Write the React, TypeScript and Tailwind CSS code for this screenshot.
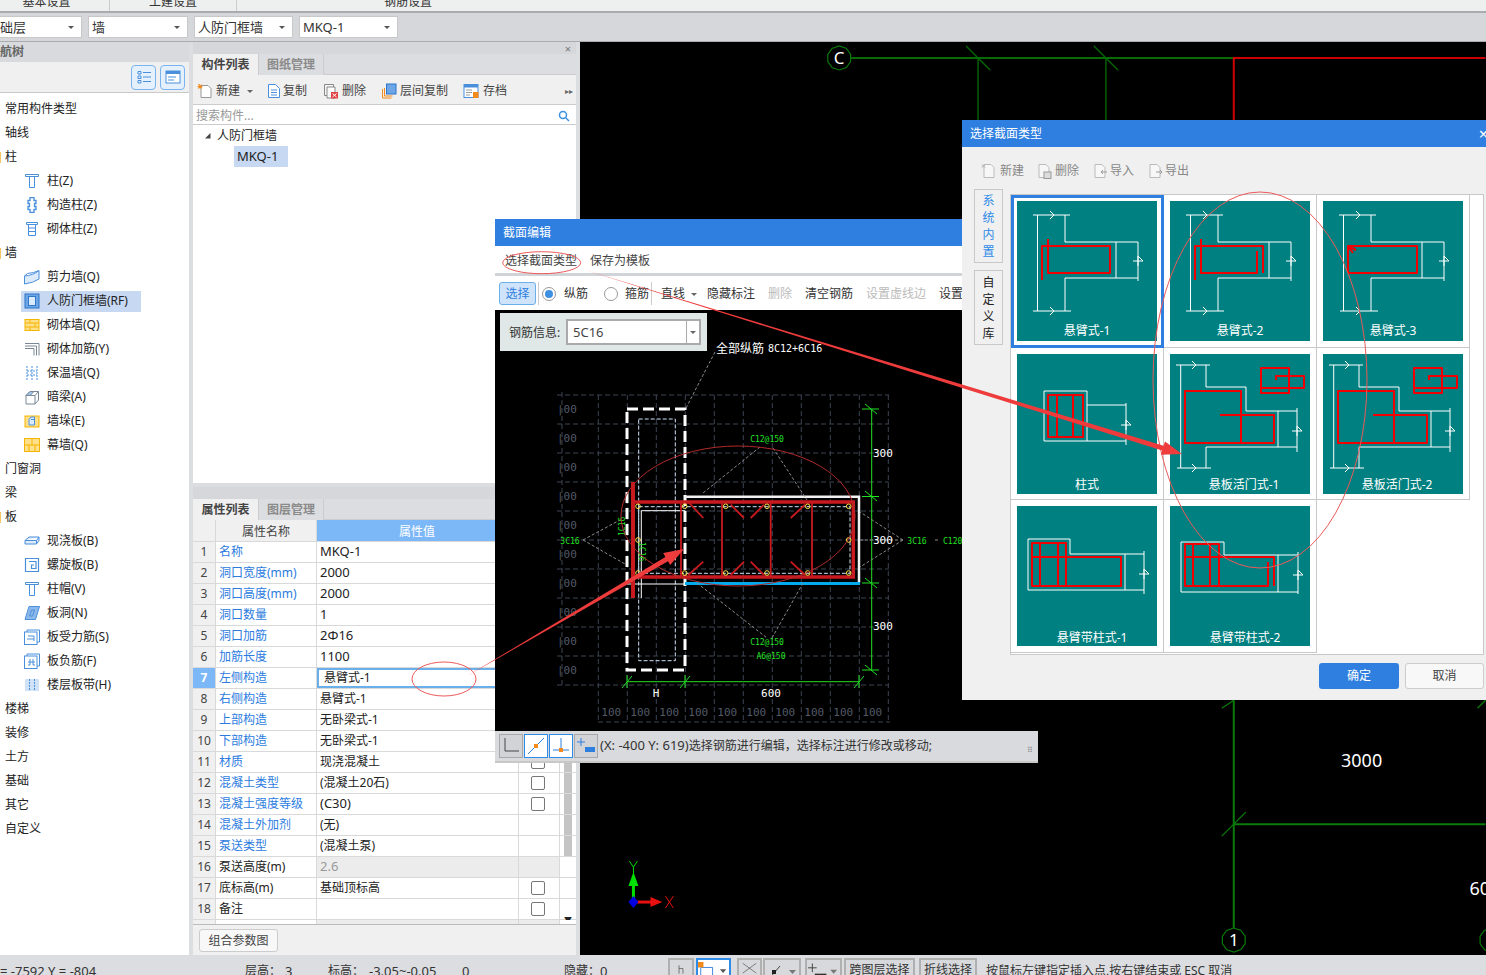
import React from "react";

const BLUE = "#4a8fdc";

type TreeRow = { label: string; icon?: string; mark?: boolean; active?: boolean };

const treeRows: TreeRow[] = [
  { label: "常用构件类型" },
  { label: "轴线" },
  { label: "柱", mark: true },
  { label: "柱(Z)", icon: "column" },
  { label: "构造柱(Z)", icon: "tie" },
  { label: "砌体柱(Z)", icon: "masonryCol" },
  { label: "墙", mark: true },
  { label: "剪力墙(Q)", icon: "shear" },
  { label: "人防门框墙(RF)", icon: "frame", active: true },
  { label: "砌体墙(Q)", icon: "brick" },
  { label: "砌体加筋(Y)", icon: "bars" },
  { label: "保温墙(Q)", icon: "insul" },
  { label: "暗梁(A)", icon: "beam" },
  { label: "墙垛(E)", icon: "pier" },
  { label: "幕墙(Q)", icon: "curtain" },
  { label: "门窗洞" },
  { label: "梁" },
  { label: "板", mark: true },
  { label: "现浇板(B)", icon: "slab" },
  { label: "螺旋板(B)", icon: "spiral" },
  { label: "柱帽(V)", icon: "column" },
  { label: "板洞(N)", icon: "hole" },
  { label: "板受力筋(S)", icon: "rebarS" },
  { label: "板负筋(F)", icon: "rebarF" },
  { label: "楼层板带(H)", icon: "strip" },
  { label: "楼梯" },
  { label: "装修" },
  { label: "土方" },
  { label: "基础" },
  { label: "其它" },
  { label: "自定义" },
];

type PropRow = { name: string; value: string; plain?: boolean; check?: boolean; off?: boolean; latin?: boolean };

const propRows: PropRow[] = [
  { name: "名称", value: "MKQ-1", latin: true },
  { name: "洞口宽度(mm)", value: "2000", latin: true },
  { name: "洞口高度(mm)", value: "2000", latin: true },
  { name: "洞口数量", value: "1", latin: true },
  { name: "洞口加筋", value: "2Φ16", latin: true },
  { name: "加筋长度", value: "1100", latin: true },
  { name: "左侧构造", value: "悬臂式-1" },
  { name: "右侧构造", value: "悬臂式-1" },
  { name: "上部构造", value: "无卧梁式-1" },
  { name: "下部构造", value: "无卧梁式-1" },
  { name: "材质", value: "现浇混凝土", check: true },
  { name: "混凝土类型", value: "(混凝土20石)", check: true },
  { name: "混凝土强度等级", value: "(C30)", check: true, latin: true },
  { name: "混凝土外加剂", value: "(无)" },
  { name: "泵送类型", value: "(混凝土泵)" },
  { name: "泵送高度(m)", value: "2.6", plain: true, off: true, latin: true },
  { name: "底标高(m)", value: "基础顶标高", plain: true, check: true },
  { name: "备注", value: "", plain: true, check: true },
  { name: "", value: "", off: true, plain: true },
];

function TreeIcon({ name }: { name: string }) {
  const s = { fill: "none", stroke: BLUE, strokeWidth: 1 };
  const o = { fill: "#ffe08a", stroke: "#f5b400", strokeWidth: 1 };
  const icons: Record<string, React.ReactNode> = {
    column: <path {...s} d="M1.500 1.500h13v2h-13zM5.500 3.500v11h5v-11" />,
    tie: <path {...s} strokeWidth="1.300" d="M6 .5h4v3h2v3h-1.500v3H12v3h-2v3H6v-3H4v-3h1.500v-3H4v-3h2z" />,
    masonryCol: <path {...s} d="M2.500 1.500h11v2h-11zM4.500 3.500h7v11h-7zM4.500 7h7M4.500 10.500h7" />,
    shear: (
      <g {...s}>
        <path fill="#dcebfb" d="M.5 7Q9 6.500 15 1.500V10Q9 14 .5 15z" />
        <path d="M.5 7l3-2.500Q10 4 15 1.500" />
      </g>
    ),
    frame: (
      <g>
        <rect x="1" y="1" width="14" height="14" fill="#6ca6e6" stroke="#2f75c8" />
        <rect x="4.500" y="3.500" width="7" height="9" fill="#dcebfb" stroke="#2f75c8" />
      </g>
    ),
    brick: (
      <g {...o}>
        <rect x="1" y="2.500" width="14" height="11" />
        <path d="M1 6h14M1 10h14M6 2.500V6M11 6v4M6 10v3.500" />
      </g>
    ),
    bars: <path fill="none" stroke="#7a8794" d="M1 2.500h14v12M1 5h11.500v9.500M1 7.500h9v7" />,
    insul: <path {...s} strokeDasharray="2 1" d="M3 1v14M8 1v14M13 1v14M3 6h10M3 10h10" />,
    beam: (
      <g fill="none" stroke="#7a8794">
        <path d="M2 6.500V15h9V6.500zM2 6.500 6 2.500h8.500L11 6.500M14.500 2.500V11L11 15" />
        <path fill="#9fc4ee" d="M2 6.500 6 2.500h4L6 6.500z" />
      </g>
    ),
    pier: (
      <g>
        <rect x="1" y="3" width="14" height="11" fill="#ffe08a" stroke="#f5b400" />
        <path fill="#dcebfb" stroke={BLUE} d="M5 6.500 7 4h3.500v8H5zM7 6.500h3.500" />
      </g>
    ),
    curtain: (
      <g {...o}>
        <rect x=".5" y="1.500" width="15" height="13" />
        <path d="M.5 8h15M8 1.500V8M5 8v6.500M11 8v6.500" />
      </g>
    ),
    slab: <path {...s} fill="#dcebfb" d="M1 7.500 5 4h10l-2.500 3.500zM1 7.500v3.500h11.500l2.500-3.500V4M12.500 7.500V11" />,
    spiral: <path {...s} strokeWidth="1.200" d="M1.500 1.500h13v13h-13zM5 4.500h7v7H7.500V8H10" />,
    hole: <path stroke={BLUE} fill="#8db8ea" d="M1 14.500 5 1.500h10.500l-4 13zM5.500 11l2-6h3l-2 6z" />,
    rebarS: (
      <g {...s}>
        <rect x=".5" y="3" width="12.500" height="12.500" />
        <path d="M3 3V1h12.500v12H13M4 7h6v5M3 10h7" />
      </g>
    ),
    rebarF: (
      <g {...s}>
        <rect x=".5" y="3" width="12.500" height="12.500" />
        <path d="M3 3V1h12.500v12H13M6 6v6h-2M9 6v6h2M4 9h7" />
      </g>
    ),
    strip: (
      <g>
        <rect x="1" y="2" width="14" height="12" fill="#cfe2f8" />
        <path stroke={BLUE} strokeDasharray="2 1" d="M5.500 2v12M10.500 2v12" />
      </g>
    ),
  };
  return (
    <svg viewBox="0 0 16 16" className="h-4 w-4 shrink-0">
      {icons[name]}
    </svg>
  );
}

function NavTree() {
  return (
    <div className="flex w-[189px] shrink-0 flex-col bg-white">
      <div className="h-[20px] overflow-hidden bg-[#d8dadd] text-[12px] leading-[20px] font-semibold text-[#666]">
        <span className="-ml-[12px] inline-block">导航树</span>
      </div>
      <div className="flex h-[31px] items-center justify-end gap-[4px] border-b border-[#c9c9c9] bg-[#f0f0f0] pr-[4px]">
        <div className="flex h-[25px] w-[25px] items-center justify-center rounded-[4px] border border-[#79b4f0] bg-[#e4f0fc]">
          <svg viewBox="0 0 16 16" className="h-4 w-4">
            <path fill="none" stroke={BLUE} d="M2 2.500h3v2.500H2zM2 7h3v2.500H2zM2 11.500h3V14H2zM7 3.500h8M7 8h8M7 12.500h8" />
          </svg>
        </div>
        <div className="flex h-[25px] w-[25px] items-center justify-center rounded-[4px] border border-[#79b4f0] bg-[#e4f0fc]">
          <svg viewBox="0 0 16 16" className="h-4 w-4">
            <rect x="1" y="2" width="14" height="12" fill="#fff" stroke={BLUE} />
            <path fill={BLUE} d="M1 2h14v3H1z" />
            <path stroke={BLUE} d="M3 8h8M3 11h6" />
          </svg>
        </div>
      </div>
      <div className="pt-[4px] text-[12px] text-[#222]">
        {treeRows.map((r) =>
          r.icon ? (
            <div key={r.label} className="flex h-6 items-center">
              <div className={`ml-[21px] flex h-[21px] w-[120px] items-center gap-[7px] pl-[3px] ${r.active ? "bg-[#c7d9f2]" : ""}`}>
                <TreeIcon name={r.icon} />
                <span className="whitespace-nowrap">{r.label}</span>
              </div>
            </div>
          ) : (
            <div key={r.label} className="flex h-6 items-center">
              <div className={`mr-[4px] h-[11px] w-px ${r.mark ? "bg-[#f5c563]" : ""}`} />
              <span>{r.label}</span>
            </div>
          )
        )}
      </div>
    </div>
  );
}

function ToolDoc({ kind }: { kind: string }) {
  const icons: Record<string, React.ReactNode> = {
    add: (
      <g>
        <path fill="#fff" stroke="#999" d="M4 2.500h7l3 3v9H4z" />
        <path fill="#f28a1e" d="M1 1h1.500l.5 1.500L4.500 1v2L6 3.500 4.500 4.500 5 6 3 5 1 6l.500-1.500L0 3.500l2-.5z" />
      </g>
    ),
    copy: (
      <g fill="#fff" stroke={BLUE}>
        <path d="M2.500 1.500h7l4 4v9h-11z" />
        <path d="M5 7h6M5 9.500h6M5 12h6" />
      </g>
    ),
    del: (
      <g>
        <path fill="#f6f6f6" stroke="#888" d="M1.500 1.500h9v11h-9z" />
        <path fill="#fff" stroke="#888" d="M4 4h8v11H4z" />
        <rect x="8" y="9" width="7" height="6.500" fill="#e04040" />
        <path stroke="#fff" d="M9.500 10.500l4 3.500M13.500 10.500l-4 3.500" />
      </g>
    ),
    floors: (
      <g>
        <path fill="none" stroke="#f28a1e" d="M1.500 6v9h9M3.500 5v8h8" />
        <rect x="5.500" y="1" width="9.500" height="10" fill="#6ca6e6" stroke="#2f75c8" />
      </g>
    ),
    save: (
      <g>
        <rect x="1" y="1.500" width="14" height="13" fill="#fff" stroke={BLUE} />
        <path fill={BLUE} d="M1 1.500h14v3H1z" />
        <path stroke="#999" d="M3 7h6M3 9.500h6M3 12h4" />
        <rect x="10" y="9" width="5.500" height="6" fill="#f28a1e" />
      </g>
    ),
  };
  return (
    <svg viewBox="0 0 16 16" className="h-4 w-4 shrink-0">
      {icons[kind]}
    </svg>
  );
}

function TabPair({ a, b }: { a: string; b: string }) {
  return (
    <div className="flex h-[21px] bg-[#f0f0f0] text-[12px] leading-[21px]">
      <div className="w-[66px] border-r border-[#ccc] text-center font-semibold text-[#444]">{a}</div>
      <div className="w-[65px] border-r border-[#ccc] bg-[#dcdde0] text-center font-semibold text-[#8a8a8a]">{b}</div>
      <div className="flex-1 border-b border-[#ccc] bg-[#dcdde0]" />
    </div>
  );
}

function ComponentPanel() {
  return (
    <div className="flex h-[441px] flex-col bg-white">
      <div className="flex h-[12px] items-center justify-end bg-[#d5d7da] pr-[5px] text-[11px] leading-none text-[#777]">×</div>
      <TabPair a="构件列表" b="图纸管理" />
      <div className="flex h-[30px] items-center border-b border-[#ccc] bg-[#f0f0f0] pt-[2px] pl-[4px] text-[12px] text-[#444]">
        <ToolDoc kind="add" />
        <span className="ml-[3px]">新建</span>
        <svg viewBox="0 0 8 8" className="ml-[6px] h-2 w-2">
          <path fill="#666" d="M1 3h6L4 6z" />
        </svg>
        <span className="ml-[12px]" />
        <ToolDoc kind="copy" />
        <span className="ml-[1px]">复制</span>
        <span className="ml-[16px]" />
        <ToolDoc kind="del" />
        <span className="ml-[3px]">删除</span>
        <span className="ml-[15px]" />
        <ToolDoc kind="floors" />
        <span className="ml-[3px]">层间复制</span>
        <span className="ml-[15px]" />
        <ToolDoc kind="save" />
        <span className="ml-[4px]">存档</span>
        <span className="ml-auto pr-[3px] text-[8px] text-[#666]">▸▸</span>
      </div>
      <div className="flex h-[20px] items-center justify-between border-b border-[#ccc] pt-[2px] pr-[6px] pl-[3px] text-[12px] text-[#999]">
        <span>搜索构件...</span>
        <svg viewBox="0 0 12 12" className="h-3 w-3">
          <circle cx="5" cy="5" r="3.500" fill="none" stroke="#3d8fe0" strokeWidth="1.500" />
          <path stroke="#3d8fe0" strokeWidth="1.500" d="M8 8l3 3" />
        </svg>
      </div>
      <div className="flex h-[21px] items-center pl-[11px] text-[12px] text-[#222]">
        <svg viewBox="0 0 8 8" className="h-2 w-2">
          <path fill="#444" d="M1 6.500 6.500 1v5.500z" />
        </svg>
        <span className="ml-[5px]">人防门框墙</span>
      </div>
      <div className="ml-[41px] h-[21px] w-[54px] bg-[#c7d9f2] pl-[3px] text-[13px] leading-[21px] text-[#222]">MKQ-1</div>
    </div>
  );
}

function PropertyPanel() {
  return (
    <div className="flex flex-1 flex-col bg-[#f0f0f0]">
      <div className="h-[12px] bg-[#d5d7da]" />
      <TabPair a="属性列表" b="图层管理" />
      <div className="h-[405px] overflow-hidden border-b border-[#bbb] bg-white text-[12px]">
        <div className="flex h-[22px] border-b border-[#d9d9d9] leading-[23px]">
          <div className="w-[23px] border-r border-[#d9d9d9] bg-[#f0f0f0]" />
          <div className="w-[101px] border-r border-[#d9d9d9] bg-[#f0f0f0] text-center text-[#444]">属性名称</div>
          <div className="flex-1 bg-[#7cb8f8] pr-[59px] text-center text-white">属性值</div>
        </div>
        {propRows.map((r, i) => {
          const selected = i === 6;
          return (
            <div key={i} className="flex h-[21px] border-b border-[#d9d9d9] leading-[20px]">
              <div className={`w-[23px] border-r border-[#d9d9d9] text-center ${selected ? "bg-[#7cb8f8] font-bold text-white" : "bg-[#f0f0f0] text-[#444]"}`}>
                {i < 18 ? i + 1 : ""}
              </div>
              <div className={`w-[101px] border-r border-[#d9d9d9] pl-[3px] whitespace-nowrap ${r.plain ? "text-[#222]" : "text-[#2c7ce0]"}`}>
                {r.name}
              </div>
              <div
                className={`w-[202px] ${r.latin ? "text-[13px] leading-[19px]" : "text-[12px]"} ${r.off ? "bg-[#ececec] text-[#999]" : "text-[#222]"} ${selected ? "border-2 border-[#6aaeea] pl-[5px] leading-[16px]" : "border-r border-[#d9d9d9] pl-[3px]"}`}
              >
                {r.value}
              </div>
              <div className={`flex w-[41px] items-center justify-center border-r border-[#d9d9d9] pr-[2px] ${r.off ? "bg-[#ececec]" : ""}`}>
                {r.check && <div className="h-[14px] w-[14px] rounded-[2px] border border-[#777] bg-white" />}
              </div>
              <div className="flex w-[16px] justify-center bg-white">
                {i < 15 && <div className="w-[8px] bg-[#c4c4c4]" />}
                {i === 17 && <span className="text-[8px] leading-[42px] text-[#222]">▼</span>}
              </div>
            </div>
          );
        })}
      </div>
      <div className="pt-[4px] pl-[6px]">
        <div className="h-[23px] w-[79px] rounded-[3px] border border-[#ccc] bg-[#f8f8f8] text-center text-[12px] leading-[21px] text-[#444]">组合参数图</div>
      </div>
    </div>
  );
}

function MainCanvas() {
  const circle = (cx: number, cy: number) => (
    <polygon
      fill="none"
      stroke="#0a7a0a"
      strokeWidth="1.200"
      points={Array.from({ length: 10 }, (_, i) => {
        const a = (i / 10) * Math.PI * 2 + 0.3;
        return `${cx + 12 * Math.cos(a)},${cy + 12 * Math.sin(a)}`;
      }).join(" ")}
    />
  );
  return (
    <div className="min-w-0 flex-1 bg-black">
      <svg viewBox="580 41 906 914" className="block h-full w-full">
        <g stroke="#056b05" fill="none">
          <path strokeWidth="2" d="M851 57H1234" />
          <path strokeWidth="1.300" d="M978 57V120M1106 57V120M966 45l24 24M1094 45l24 24" />
          <path strokeWidth="2" stroke="#0a7a0a" d="M1234 700V928M1234 824H1486" />
          <path strokeWidth="1.300" stroke="#0a7a0a" d="M1222 836l24-24M1222 708l12-8M1478 708l8-8" />
        </g>
        <path stroke="#cc0000" strokeWidth="2" fill="none" d="M1486 57H1234V120" />
        {circle(839, 57)}
        {circle(1234, 940)}
        {circle(1492, 940)}
        <g fill="#fff">
          <text x="839" y="63" textAnchor="middle" className="text-[17px]">C</text>
          <text x="1234" y="946" textAnchor="middle" className="text-[17px]">1</text>
          <text x="1362" y="767" textAnchor="middle" className="text-[18px]">3000</text>
          <text x="1470" y="895" className="text-[18px]">60</text>
        </g>
        <path stroke="#00e000" strokeWidth="3" d="M633 902V884" />
        <path fill="#00e000" d="M628 886l5-14 5 14z" />
        <path stroke="#e81010" strokeWidth="3" d="M633 902H652" />
        <path fill="#e81010" d="M650 897l12 5-12 5z" />
        <path fill="#0000e0" d="M633 896l5 6-5 6-5-6z" />
        <path stroke="#00e000" fill="none" d="M629 861l4 6 4-6M633 867v6" />
        <path stroke="#e81010" fill="none" d="M665 896l8 12M673 896l-8 12" />
      </svg>
    </div>
  );
}

function SectionDrawing() {
  const xs = [598.3, 627.3, 656.3, 685.3, 714.3, 743.3, 772.3, 801.3, 830.3, 859.3, 888.3];
  const ys = [395, 424, 453, 482, 511, 540, 569, 598, 627, 656, 685];
  const rebarX = [638, 684.7, 725.7, 767, 807.7, 848.7];
  const font = "font-['DejaVu_Sans_Mono','Liberation_Mono',monospace]";
  return (
    <svg viewBox="495 310 543 421" className="block h-[421px] w-[543px]">
      <g stroke="#3d4452" strokeDasharray="5 3" fill="none">
        {xs.map((x) => (
          <path key={x} d={`M${x} 395V723`} />
        ))}
        {ys.map((y) => (
          <path key={y} d={`M557 ${y}H889`} />
        ))}
        <path d="M562 392V686M598 722H890" />
      </g>
      <g fill="#525a68" className={`${font} text-[11px]`}>
        {ys.slice(0, 10).map((y) => (
          <text key={y} x="557" y={y + 18}>|00</text>
        ))}
        {xs.slice(0, 10).map((x) => (
          <text key={x} x={x + 3} y="716">100</text>
        ))}
      </g>

      <rect x="627" y="409" width="58" height="261" fill="none" stroke="#fff" strokeWidth="3" strokeDasharray="11 5" />
      <rect x="638.700" y="419" width="36.600" height="241.700" fill="none" stroke="#cfe2f8" strokeDasharray="4 2" />
      <path d="M685 496.700H859V583" fill="none" stroke="#f2f2f2" strokeWidth="2.500" />
      <path d="M685 583.500H860" stroke="#00aaee" strokeWidth="3" />
      <path d="M685 510.700H641.300V598M627 584H685" fill="none" stroke="#fff" />
      <rect x="638.700" y="506.700" width="211.300" height="66.600" fill="none" stroke="#cfe2f8" strokeDasharray="4 2" />

      <g stroke="#c8191e" fill="none">
        <path strokeWidth="3.500" d="M632 502H853.300V577H632" />
        <path strokeWidth="4" d="M633 482V598" />
        <path strokeWidth="1.800" d="M681 502V577M722 502V577M770.700 502V577M812 502V577" />
        <path strokeWidth="1.800" d="M688.300 502l15 16M730.700 504.700 744 518M764 504.700 750.700 518M805 504.700 790.700 518M688.300 575l15-13.300M730.700 575 744 561.700M764 575l-13.300-13.300M805 575l-14.300-13.300" />
      </g>
      <g fill="none" stroke="#ffe14a">
        {rebarX.map((x) => (
          <React.Fragment key={x}>
            <circle cx={x} cy="506.300" r="2.300" />
            <circle cx={x} cy="573" r="2.300" />
          </React.Fragment>
        ))}
        <circle cx="638" cy="540" r="2.300" />
        <circle cx="848.700" cy="540" r="2.300" />
      </g>

      <g stroke="#22e022" fill="none">
        <path d="M871.700 409V670M862 409h17M862 496.500h17M862 583h17M862 670h17M627 681.700H859M627 675v13M685 675v13M859 675v13" />
        <path d="M865 404l12 10M865 491l12 10M865 578l12 10M865 665l12 10M622 688l10-12M680 688l10-12M854 688l10-12" />
      </g>
      <g stroke="#8a8a8a" strokeDasharray="3 2" fill="none">
        <path d="M715 352 686 408M760 447 703 493M773 448l34 52M697 583l70 55M803 583l-31 55M583 540l37-20M583 540l42 24M903 540l-43-28M903 540l-43 27M860 540h43M935 540h5" />
      </g>
      <g fill="#22e022" className={`${font} text-[8px]`}>
        <text x="767" y="442" textAnchor="middle">C12@150</text>
        <text x="570" y="544" textAnchor="middle">3C16</text>
        <text x="917" y="544" textAnchor="middle">3C16</text>
        <text x="943" y="544">C120</text>
        <text x="767" y="645" textAnchor="middle">C12@150</text>
        <text x="771" y="659" textAnchor="middle">A6@150</text>
        <text x="625" y="536" transform="rotate(-90 625 536)">1C16</text>
        <text x="639" y="542" transform="rotate(90 639 542)">1C16</text>
      </g>
      <g fill="#fff" className={`${font} text-[11px]`}>
        <text x="873" y="457">300</text>
        <text x="873" y="544">300</text>
        <text x="873" y="630">300</text>
        <text x="656" y="697" textAnchor="middle">H</text>
        <text x="771" y="697" textAnchor="middle">600</text>
        <text x="768" y="352" className="text-[10px]">8C12+6C16</text>
      </g>
      <text x="716" y="353" fill="#fff" className="text-[12px]">全部纵筋</text>
      <ellipse cx="738" cy="516" rx="117" ry="70" fill="none" stroke="#b02a2a" />
    </svg>
  );
}

function Radio({ on }: { on?: boolean }) {
  return (
    <div className="flex h-[14px] w-[14px] items-center justify-center rounded-full border border-[#999] bg-white">
      {on && <div className="h-[8px] w-[8px] rounded-full bg-[#3d8fe0]" />}
    </div>
  );
}

function StatusSnap({ kind, on }: { kind: string; on?: boolean }) {
  const draw: Record<string, React.ReactNode> = {
    corner: <path fill="none" stroke="#444" d="M5 3v13h14" />,
    line: (
      <g>
        <path stroke="#2f7fe0" d="M3 19 19 3" />
        <rect x="9" y="9" width="4" height="4" fill="#f28a1e" />
      </g>
    ),
    perp: (
      <g>
        <path stroke="#2f7fe0" d="M3 15h16M11 3v12" />
        <rect x="9" y="13" width="4" height="4" fill="#f28a1e" />
      </g>
    ),
    add: (
      <g>
        <path stroke="#2f7fe0" d="M2 7h8M6 3v8" />
        <rect x="10" y="12" width="10" height="5" fill="#2f7fe0" />
      </g>
    ),
  };
  return (
    <div className={`h-[24px] w-[24px] shrink-0 border ${on ? "border-[#2f8be8] bg-white" : "border-[#a8a8a8] bg-[#d2d3d6]"}`}>
      <svg viewBox="0 0 22 22" className="h-full w-full">
        {draw[kind]}
      </svg>
    </div>
  );
}

function SectionDialog() {
  return (
    <div className="absolute top-[219px] left-[495px] flex h-[544px] w-[543px] flex-col bg-[#d8dadd] text-[12px]">
      <div className="h-[27px] bg-[#2f7fe0] pl-[8px] leading-[27px] text-white">截面编辑</div>
      <div className="flex h-[30px] items-center border-b-[3px] border-[#d0d4d8] bg-white pt-[2px] text-[#444]">
        <span className="ml-[10px] w-[85px]">选择截面类型</span>
        <span>保存为模板</span>
      </div>
      <div className="flex h-[34px] items-center bg-white pt-[1px] text-[#333] whitespace-nowrap">
        <div className="ml-[4px] h-[23px] w-[37px] rounded-[3px] border border-[#6aaeea] bg-[#cfe4fb] text-center leading-[21px] text-[#2f7fe0]">选择</div>
        <div className="ml-[2px] h-[23px] w-px bg-[#ccc]" />
        <div className="ml-[3px]"><Radio on /></div>
        <span className="ml-[8px] w-[40px]">纵筋</span>
        <Radio />
        <span className="ml-[7px] w-[26px]">箍筋</span>
        <div className="h-[23px] w-px bg-[#ccc]" />
        <span className="ml-[9px]">直线</span>
        <svg viewBox="0 0 8 8" className="ml-[5px] h-2 w-2">
          <path fill="#666" d="M1 3h6L4 6z" />
        </svg>
        <span className="ml-[9px]">隐藏标注</span>
        <span className="ml-[13px] text-[#bbb]">删除</span>
        <span className="ml-[13px]">清空钢筋</span>
        <span className="ml-[13px] text-[#bbb]">设置虚线边</span>
        <span className="ml-[13px]">设置</span>
      </div>
      <div className="relative h-[421px] bg-black">
        <SectionDrawing />
        <div className="absolute top-[3px] left-[5px] flex h-[38px] w-[207px] items-center bg-[#dfe7e7] pl-[9px] text-[#333]">
          <span className="w-[57px] pt-[2px]">钢筋信息:</span>
          <div className="flex h-[26px] w-[135px] items-center justify-between border-2 border-[#aaa] bg-white pl-[5px] text-[13px]">
            <span className="pt-[2px] text-[#444]">5C16</span>
            <div className="flex h-full w-[13px] items-center justify-center border-l border-[#aaa]">
              <svg viewBox="0 0 8 8" className="h-2 w-2">
                <path fill="#666" d="M1 3h6L4 6z" />
              </svg>
            </div>
          </div>
        </div>
      </div>
      <div className="flex flex-1 items-center border-b-2 border-[#c8c8c8] pl-[4px] text-[#333]">
        <StatusSnap kind="corner" />
        <div className="ml-px"><StatusSnap kind="line" on /></div>
        <div className="ml-px"><StatusSnap kind="perp" on /></div>
        <div className="ml-px"><StatusSnap kind="add" /></div>
        <span className="ml-[2px] whitespace-nowrap">
          <span className="text-[13px]">(X: -400 Y: 619)</span>选择钢筋进行编辑，选择标注进行修改或移动;
        </span>
        <span className="mt-[8px] ml-auto pr-[5px] text-[8px] leading-none text-[#888]">⠿</span>
      </div>
    </div>
  );
}

function Brk({ x, y, v }: { x: number; y: number; v?: boolean }) {
  return v ? (
    <path d={`M${x - 5} ${y + 2}h10l-5 -5v10`} fill="none" stroke="#fff" />
  ) : (
    <path d={`M${x - 2} ${y - 4}l4 4l-4 4`} fill="none" stroke="#fff" />
  );
}

function Tile({ caption, cx = 70, cy, children }: { caption: string; cx?: number; cy: number; children: React.ReactNode }) {
  return (
    <div className="h-[140px] w-[140px] bg-[#008080]">
      <svg viewBox="0 0 140 140" className="block h-full w-full">
        {children}
        <text x={cx} y={cy} textAnchor="middle" fill="#fff" className="text-[12px]">{caption}</text>
      </svg>
    </div>
  );
}

const White = ({ d }: { d: string }) => <path d={d} fill="none" stroke="#fff" strokeWidth="1" />;
const Red = ({ d }: { d: string }) => <path d={d} fill="none" stroke="#f00000" strokeWidth="2" strokeLinejoin="round" />;

function CantileverBase({ shift = 0 }: { shift?: number }) {
  return (
    <>
      <White d={`M16 14H53M20.500 14V110M48 14V41H121M99 41V77M121 41V80M48 77H121M48 77V110M${16 + shift} 110H${54 + shift}`} />
      <Brk x={35} y={14} />
      <Brk x={35} y={110} />
      <Brk x={121} y={58} v />
    </>
  );
}

function DoorBase() {
  return (
    <>
      <White d="M6 11H40M10.700 11V114M36 11V33H76V57H127M108 57V93M127 54V98M36 93H127M36 93V114M7 114H41" />
      <Brk x={24} y={11} />
      <Brk x={24} y={114} />
      <Brk x={127} y={75} v />
      <Red d="M15 37H71V89H15ZM71 89H104V61H50M91 14H119V39H91ZM106 22H134V34H91M119 22H106V26" />
    </>
  );
}

const tiles: { caption: string; cx?: number; cy: number; body: React.ReactNode }[] = [
  {
    caption: "悬臂式-1",
    cy: 134,
    body: (
      <>
        <CantileverBase />
        <Red d="M31 38V72H93V45H25V79" />
      </>
    ),
  },
  {
    caption: "悬臂式-2",
    cy: 134,
    body: (
      <>
        <CantileverBase />
        <Red d="M25 79V45H93V72M31 38V72H87V50" />
      </>
    ),
  },
  {
    caption: "悬臂式-3",
    cy: 134,
    body: (
      <>
        <CantileverBase shift={1} />
        <Red d="M25 72V45H94V72H25M25 45l8 4M25 45l5 7" />
      </>
    ),
  },
  {
    caption: "柱式",
    cy: 135,
    body: (
      <>
        <White d="M27 37H70V87H27ZM70 51H109M70 87H109M109 49V91" />
        <Brk x={109} y={69} v />
        <Red d="M31 41H66V83H31ZM40 41V83M56 41V83" />
      </>
    ),
  },
  { caption: "悬板活门式-1", cx: 74, cy: 135, body: <DoorBase /> },
  { caption: "悬板活门式-2", cx: 74, cy: 135, body: <DoorBase /> },
  {
    caption: "悬臂带柱式-1",
    cx: 75,
    cy: 136,
    body: (
      <>
        <White d="M11 33H53V48H127M108 48V84M127 45V88M11 84H127M11 33V84" />
        <Brk x={127} y={66} v />
        <Red d="M15 37H49V51H104V80H15ZM23 37V80M41 37V80M49 37V80M15 51H49" />
      </>
    ),
  },
  {
    caption: "悬臂带柱式-2",
    cx: 75,
    cy: 136,
    body: (
      <>
        <White d="M11 36H54V49H128M108 49V86M128 46V88M11 86H128M11 36V86" />
        <Brk x={128} y={67} v />
        <Red d="M15 38H49V80H15ZM23 38V80M40 38V80M48 51H104V80M15 51H48M48 80H98V56" />
      </>
    ),
  },
];

function MutedDoc({ kind }: { kind: string }) {
  return (
    <svg viewBox="0 0 16 16" className="h-4 w-4 shrink-0" fill="#f7f7f7" stroke="#bbb">
      <path d="M3 1.500h7l3 3v10H3z" />
      {kind === "add" && <path d="M1 1.500l3 3M4 1.500l-3 3" stroke="#aaa" />}
      {kind === "del" && <rect x="8" y="9" width="7" height="6.500" fill="#ddd" stroke="#999" />}
      {kind === "in" && <path d="M15 9H9M11 7 9 9l2 2" stroke="#999" />}
      {kind === "out" && <path d="M9 9h6M13 7l2 2-2 2" stroke="#999" />}
    </svg>
  );
}

function TypeDialog() {
  return (
    <div className="absolute top-[120px] left-[962px] flex h-[580px] w-[524px] flex-col bg-[#f0f0f0] text-[12px]">
      <div className="flex h-[27px] items-center justify-between overflow-hidden bg-[#2f7fe0] pl-[8px] text-white">
        <span>选择截面类型</span>
        <span className="-mr-[2px] text-[16px] leading-none">×</span>
      </div>
      <div className="flex h-[47px] items-center pl-[19px] text-[#888]">
        <MutedDoc kind="add" />
        <span className="ml-[3px]">新建</span>
        <span className="ml-[12px]" />
        <MutedDoc kind="del" />
        <span className="ml-[3px]">删除</span>
        <span className="ml-[13px]" />
        <MutedDoc kind="in" />
        <span className="ml-[2px]">导入</span>
        <span className="ml-[13px]" />
        <MutedDoc kind="out" />
        <span className="ml-[2px]">导出</span>
      </div>
      <div className="flex">
        <div className="ml-[12px] flex w-[29px] flex-col gap-[7px]">
          <div className="-mt-[5px] flex h-[74px] flex-col items-center justify-center border border-[#c8c8c8] text-center leading-[17px] text-[#2f8be8]">
            <span>系</span><span>统</span><span>内</span><span>置</span>
          </div>
          <div className="flex h-[75px] flex-col items-center justify-center border border-[#c8c8c8] text-center leading-[17px] text-[#222]">
            <span>自</span><span>定</span><span>义</span><span>库</span>
          </div>
        </div>
        <div className="ml-[7px] h-[461px] w-[474px] border border-[#c8c8c8] bg-white">
          <div className="grid w-[459px] grid-cols-3">
            {tiles.map((t, i) => (
              <div
                key={t.caption}
                className={`flex w-[153px] items-center justify-center border-r border-b border-[#c8c8c8] ${i >= 3 && i < 6 ? "h-[152px]" : "h-[153px]"} ${i === 0 ? "outline-[3px] -outline-offset-[3px] outline-[#2f7fe0]" : ""}`}
              >
                <Tile caption={t.caption} cx={t.cx} cy={t.cy}>{t.body}</Tile>
              </div>
            ))}
          </div>
        </div>
      </div>
      <div className="flex flex-1 items-center justify-end gap-[6px] pr-[2px] pb-[3px]">
        <div className="h-[26px] w-[80px] rounded-[3px] bg-[#2f7fe0] text-center leading-[26px] text-white">确定</div>
        <div className="h-[26px] w-[79px] rounded-[3px] border border-[#ccc] bg-[#f8f8f8] text-center leading-[24px] text-[#444]">取消</div>
      </div>
    </div>
  );
}

function Annotations() {
  return (
    <svg viewBox="0 0 1486 975" className="pointer-events-none absolute inset-0 h-[975px] w-[1486px]">
      <g fill="none" stroke="#ec5a5a">
        <ellipse cx="444" cy="679" rx="32" ry="17" />
        <ellipse cx="541.700" cy="262.700" rx="39" ry="11" />
        <ellipse cx="1260" cy="380" rx="107" ry="188" />
      </g>
      <g fill="#ee3b3b">
        <polygon points="467,676 665.400,556.900 663.200,553.100 684,549 670.200,565.100 668,561.300" />
        <polygon points="585,270 1163.600,445.700 1165,441.400 1182,454 1160.800,454.800 1162.200,450.500" />
      </g>
    </svg>
  );
}

function TopSelect({ w, text, clip }: { w: string; text: string; clip?: boolean }) {
  return (
    <div className={`flex h-[22px] items-center justify-between border border-[#c8c8c8] bg-white pr-[6px] text-[13px] text-[#333] ${w} ${clip ? "overflow-hidden border-l-0" : "pl-[3px]"}`}>
      <span className={`pt-[1px] whitespace-nowrap ${clip ? "-ml-[13px]" : ""}`}>{text}</span>
      <svg viewBox="0 0 8 8" className="h-2 w-2 shrink-0">
        <path fill="#555" d="M1 3h6L4 6z" />
      </svg>
    </div>
  );
}

function StatusButton({ w, children, on }: { w: string; children: React.ReactNode; on?: boolean }) {
  return (
    <div className={`h-[20px] shrink-0 overflow-hidden border-2 border-b-0 pt-[2px] text-center text-[12px] leading-[16px] ${w} ${on ? "border-[#2f8be8] bg-white" : "border-[#b0b0b0] bg-[#d8d9dc]"}`}>
      {children}
    </div>
  );
}

function StatusGlyph({ children }: { children: React.ReactNode }) {
  return (
    <svg viewBox="0 0 34 18" className="block h-[18px] w-full" preserveAspectRatio="xMidYMin meet">
      {children}
    </svg>
  );
}

export default function App() {
  return (
    <div className="relative flex h-[975px] w-[1486px] flex-col overflow-hidden bg-[#dcdde0] font-['Noto_Sans','Noto_Sans_CJK_SC',sans-serif]">
      <div className="flex h-[13px] overflow-hidden border-b-2 border-[#a9abae] bg-[#eef0f0] text-[12px] leading-none text-[#333]">
        <div className="-mt-[4px] w-[110px] border-r border-[#ccc] pr-[16px] text-center">基本设置</div>
        <div className="-mt-[4px] w-[127px] border-r border-[#ccc] text-center">工建设置</div>
        <div className="-mt-[4px] w-[342px] text-center">钢筋设置</div>
      </div>
      <div className="flex h-[28px] items-center gap-[6px] bg-[#d5d7da]">
        <TopSelect w="w-[82px]" text="基础层" clip />
        <TopSelect w="w-[100px]" text="墙" />
        <TopSelect w="w-[99px]" text="人防门框墙" />
        <TopSelect w="w-[99px]" text="MKQ-1" />
      </div>
      <div className="flex h-[914px] border-t border-[#a9abae]">
        <NavTree />
        <div className="ml-[4px] flex w-[383px] shrink-0 flex-col gap-[4px] overflow-hidden">
          <ComponentPanel />
          <PropertyPanel />
        </div>
        <div className="w-[4px] shrink-0" />
        <MainCanvas />
      </div>
      <div className="flex h-[20px] overflow-hidden text-[12px] leading-[16px] text-[#333] whitespace-nowrap">
        <span className="mt-[8px] w-[245px] shrink-0 text-[13px]"><span className="-ml-[11px] inline-block">X = -7592 Y = -804</span></span>
        <span className="mt-[8px] w-[40px] shrink-0">层高：</span>
        <span className="mt-[8px] w-[43px] shrink-0 text-[13px]">3</span>
        <span className="mt-[8px] w-[41px] shrink-0">标高：</span>
        <span className="mt-[8px] w-[93px] shrink-0 text-[13px]">-3.05~-0.05</span>
        <span className="mt-[8px] w-[102px] shrink-0 text-[13px]">0</span>
        <span className="mt-[8px] w-[36px] shrink-0">隐藏：</span>
        <span className="mt-[8px] w-[68px] shrink-0 text-[13px]">0</span>
        <div className="mt-[3px] flex h-[17px]">
          <StatusButton w="w-[26px]">
            <StatusGlyph><path fill="none" stroke="#444" d="M14 5v13M14 10h6v8" /></StatusGlyph>
          </StatusButton>
          <div className="ml-[2px]">
            <StatusButton w="w-[35px]" on>
              <StatusGlyph>
                <path fill="none" stroke="#2f7fe0" d="M3 6v12M3 6h13v12" />
                <rect x="0" y="0" width="6" height="6" fill="#f28a1e" />
                <path fill="#555" d="M24 8h7l-3.500 4z" />
              </StatusGlyph>
            </StatusButton>
          </div>
          <div className="ml-[6px]">
            <StatusButton w="w-[25px]">
              <StatusGlyph><path fill="none" stroke="#444" d="M6 2l22 16M28 2 6 18" /></StatusGlyph>
            </StatusButton>
          </div>
          <div className="ml-px">
            <StatusButton w="w-[38px]">
              <StatusGlyph>
                <path stroke="#444" d="M3 18 15 4" />
                <rect x="7" y="8" width="4" height="4" fill="#222" />
                <path fill="#777" d="M24 8h7l-3.500 4z" />
              </StatusGlyph>
            </StatusButton>
          </div>
          <div className="ml-[4px]">
            <StatusButton w="w-[37px]">
              <StatusGlyph>
                <path stroke="#444" d="M1 6h9M5.500 1.500v9" />
                <rect x="8" y="12" width="12" height="6" fill="#333" />
                <path fill="#777" d="M24 8h7l-3.500 4z" />
              </StatusGlyph>
            </StatusButton>
          </div>
          <div className="ml-[2px]"><StatusButton w="w-[71px]">跨图层选择</StatusButton></div>
          <div className="ml-[4px]"><StatusButton w="w-[58px]">折线选择</StatusButton></div>
          <span className="ml-[9px] pt-[5px]">按鼠标左键指定插入点,按右键结束或 ESC 取消</span>
        </div>
      </div>

      <SectionDialog />
      <TypeDialog />
      <Annotations />
    </div>
  );
}
